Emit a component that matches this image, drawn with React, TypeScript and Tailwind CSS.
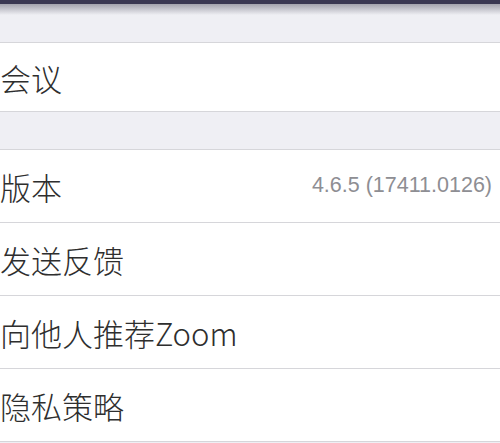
import React from 'react';

const FONT = { fontFamily: '"Noto Sans CJK SC", "Noto Sans", sans-serif' };

function Row({ label, value, h }: { label: string; value?: string; h: string }) {
  return (
    <div className={`flex items-center justify-between bg-white border-b border-[#d6d6da] ${h}`}>
      <span className="text-[31px] font-light leading-none text-[#2e2e2e]">{label}</span>
      {value && (
        <span
          className="pr-[8px] text-[21.5px] leading-none text-[#8e8e93]"
          style={{ fontFamily: '"Liberation Sans", Arial, sans-serif' }}
        >
          {value}
        </span>
      )}
    </div>
  );
}

export default function App() {
  return (
    <div className="w-[500px] h-[443px] overflow-hidden bg-[#efeff4]" style={FONT}>
      <div className="h-[4px] bg-[#3b3852]" />
      <div className="h-[11px] bg-gradient-to-b from-[#a4a3ad] to-[#efeff4]" />
      <div className="h-[27px]" />
      <div className="border-t border-[#d6d6da]">
        <Row label="会议" h="h-[69px]" />
      </div>
      <div className="h-[37px]" />
      <div className="border-t border-[#d6d6da]">
        <Row label="版本" value="4.6.5 (17411.0126)" h="h-[73px]" />
        <Row label="发送反馈" h="h-[73px]" />
        <Row label="向他人推荐Zoom" h="h-[73px]" />
        <Row label="隐私策略" h="h-[73px]" />
      </div>
    </div>
  );
}
